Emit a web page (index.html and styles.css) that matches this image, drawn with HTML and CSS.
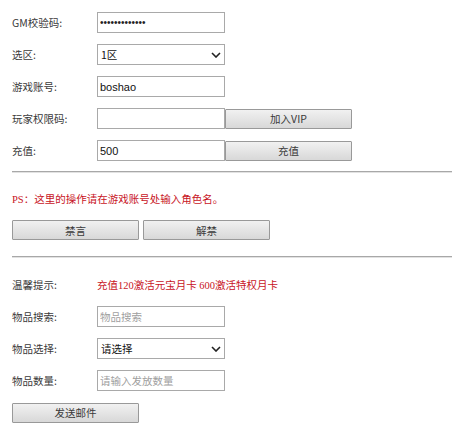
FILE: index.html
```html
<!DOCTYPE html>
<html lang="zh-CN">
<head>
    <meta charset="UTF-8">
    <meta name="viewport" content="width=device-width, initial-scale=1.0">
    <title>GM管理</title>
    <link rel="stylesheet" href="styles.css">
</head>
<body>
    <div class="panel">
        <div class="form-row">
            <label class="label">GM校验码:</label>
            <input class="field pass" type="password" value="abcdefghijklm">
        </div>
        <div class="form-row">
            <label class="label">选区:</label>
            <div class="select">
                <span>1区</span>
                <svg class="chevron" width="10" height="6" viewBox="0 0 10 6"><path d="M1 1 L5 5 L9 1" fill="none" stroke="#222" stroke-width="1.6"/></svg>
            </div>
        </div>
        <div class="form-row">
            <label class="label">游戏账号:</label>
            <input class="field" type="text" value="boshao">
        </div>
        <div class="form-row">
            <label class="label">玩家权限码:</label>
            <input class="field" type="text" value="">
            <button class="btn">加入VIP</button>
        </div>
        <div class="form-row">
            <label class="label">充值:</label>
            <input class="field" type="text" value="500">
            <button class="btn">充值</button>
        </div>

        <div class="divider"></div>

        <p class="notice">PS：这里的操作请在游戏账号处输入角色名。</p>
        <div class="btn-group">
            <button class="btn">禁言</button>
            <button class="btn">解禁</button>
        </div>

        <div class="divider second"></div>

        <div class="form-row">
            <label class="label">温馨提示:</label>
            <span class="notice">充值120激活元宝月卡 600激活特权月卡</span>
        </div>
        <div class="form-row">
            <label class="label">物品搜索:</label>
            <input class="field" type="text" placeholder="物品搜索">
        </div>
        <div class="form-row">
            <label class="label">物品选择:</label>
            <div class="select">
                <span>请选择</span>
                <svg class="chevron" width="10" height="6" viewBox="0 0 10 6"><path d="M1 1 L5 5 L9 1" fill="none" stroke="#222" stroke-width="1.6"/></svg>
            </div>
        </div>
        <div class="form-row">
            <label class="label">物品数量:</label>
            <input class="field" type="text" placeholder="请输入发放数量">
        </div>
        <div class="form-row">
            <button class="btn">发送邮件</button>
        </div>
    </div>
</body>
</html>
```

FILE: styles.css
```css
body {
    margin: 0;
    padding: 0;
    background-color: #fff;
    color: #3a3a3a;
    font-family: "Noto Sans CJK SC", sans-serif;
    font-size: 10.5px;
}
.panel {
    padding: 12px 0 0 12px;
}
.form-row {
    display: flex;
    align-items: center;
    height: 21px;
    margin-bottom: 11px;
}
.label {
    width: 85px;
}
.field {
    box-sizing: border-box;
    width: 128px;
    height: 21px;
    margin: 0;
    padding: 0 2px;
    border: 1px solid #a9a9a9;
    font-family: "Liberation Sans", "Noto Sans CJK SC", sans-serif;
    font-size: 11px;
    color: #111;
    outline: none;
}
.pass {
    font-size: 10px;
    letter-spacing: 0;
    color: #222;
}
.field::placeholder {
    color: #a0a0a0;
    font-family: "Noto Sans CJK SC", sans-serif;
    font-size: 10.5px;
    letter-spacing: 0;
}
.select {
    box-sizing: border-box;
    width: 128px;
    height: 21px;
    display: flex;
    align-items: center;
    justify-content: space-between;
    padding: 0 3px 0 3px;
    border: 1px solid #a9a9a9;
    color: #111;
}
.btn {
    box-sizing: border-box;
    width: 127px;
    height: 20px;
    margin: 0;
    padding: 0;
    border: 1px solid #999;
    border-radius: 1px;
    background: linear-gradient(#f1f1f1, #d8d8d8);
    color: #3a3a3a;
    font-family: "Noto Sans CJK SC", sans-serif;
    font-size: 10.5px;
    cursor: pointer;
}
.divider {
    border-top: 1px solid #a8a8a8;
    border-bottom: 1px solid #e2e2e2;
    margin-top: -1px;
}
.notice {
    color: #c8141e;
    font-family: "Liberation Serif", "Noto Sans CJK SC", serif;
    font-size: 10.5px;
}
p.notice {
    margin: 16px 0 0 0;
    line-height: 21px;
}
.btn-group {
    display: flex;
    gap: 4px;
    margin-top: 10px;
}
.second {
    margin-top: 16px;
    margin-bottom: 16px;
}
```
